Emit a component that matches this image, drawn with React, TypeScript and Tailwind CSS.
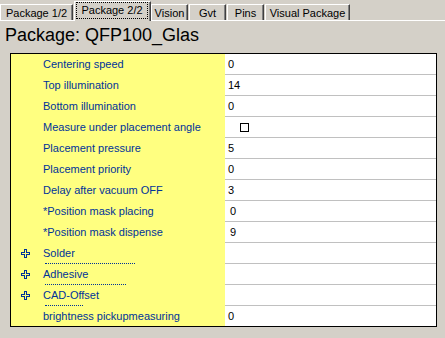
import React from "react";

type Row = {
  label: string;
  value?: string;
  checkbox?: boolean;
  group?: boolean;
  dots?: number;
  vpad?: boolean;
};

const rows: Row[] = [
  { label: "Centering speed", value: "0" },
  { label: "Top illumination", value: "14" },
  { label: "Bottom illumination", value: "0" },
  { label: "Measure under placement angle", checkbox: true },
  { label: "Placement pressure", value: "5" },
  { label: "Placement priority", value: "0" },
  { label: "Delay after vacuum OFF", value: "3" },
  { label: "*Position mask placing", value: "0", vpad: true },
  { label: "*Position mask dispense", value: "9", vpad: true },
  { label: "Solder", group: true, dots: 90 },
  { label: "Adhesive", group: true, dots: 81 },
  { label: "CAD-Offset", group: true, dots: 38 },
  { label: "brightness pickupmeasuring", value: "0" },
];

const tabs = [
  { name: "Package 1/2", w: "w-[73px]", ml: "ml-0" },
  { name: "Package 2/2", w: "w-[77px]", ml: "ml-px", active: true },
  { name: "Vision", w: "w-[37px]", ml: "ml-0" },
  { name: "Gvt", w: "w-[37px]", ml: "ml-px" },
  { name: "Pins", w: "w-[37px]", ml: "ml-px" },
  { name: "Visual Package", w: "w-[85px]", ml: "ml-px" },
];

function PlusIcon() {
  return (
    <svg width="9" height="9" viewBox="0 0 9 9" className="block">
      <path
        d="M3.5 0.5 H5.5 V3.5 H8.5 V5.5 H5.5 V8.5 H3.5 V5.5 H0.5 V3.5 H3.5 Z"
        fill="none"
        stroke="#003399"
        strokeWidth="1"
        shapeRendering="crispEdges"
      />
    </svg>
  );
}

export default function App() {
  return (
    <div
      className="w-[445px] h-[338px] overflow-hidden bg-[#d4d0c8] text-black"
      style={{ fontFamily: '"Liberation Sans", Arial, sans-serif' }}
    >
      {/* Tab strip */}
      <div className="flex h-[21px] items-end border-b border-white">
        {tabs.map((t) =>
          t.active ? (
            <div
              key={t.name}
              className={`${t.w} ${t.ml} relative z-10 -mb-px h-[20px] bg-[#d4d0c8] border-l border-t border-white border-r border-r-[#404040] shadow-[inset_-1px_0_0_#808080] pl-px pr-[2px] pb-[2px]`}
            >
              <div className="h-full border border-dotted border-black flex items-center justify-center text-[11px] leading-none">
                {t.name}
              </div>
            </div>
          ) : (
            <div
              key={t.name}
              className={`${t.w} ${t.ml} h-[16px] border-l border-t border-white border-r border-r-[#404040] shadow-[inset_-1px_0_0_#808080] flex items-center justify-center text-[11px] leading-none pt-px`}
            >
              {t.name}
            </div>
          )
        )}
      </div>

      {/* Title */}
      <div className="h-[32px] pt-[4px] pl-[5px] text-[18px] leading-[20px]">
        Package: QFP100_Glas
      </div>

      {/* Property grid */}
      <div className="ml-[10px] w-[427px] border border-black flex flex-col">
        {rows.map((r, i) => {
          const last = i === rows.length - 1;
          return (
            <div key={r.label} className="flex">
              <div
                className={`w-[214px] bg-[#ffff80] flex flex-col ${
                  last ? "h-[20px]" : "h-[21px]"
                }`}
              >
                <div className="h-[20px] flex items-center text-[11px] leading-[20px] text-[#003399]">
                  <div className="w-[32px] pl-[10px] flex items-center">
                    {r.group ? <PlusIcon /> : null}
                  </div>
                  <span className="whitespace-nowrap">{r.label}</span>
                </div>
                {!last && (
                  <div className="h-px pl-[34px]">
                    {r.dots ? (
                      <div
                        className="h-px border-t border-dotted border-[#003399]"
                        style={{ width: r.dots }}
                      />
                    ) : null}
                  </div>
                )}
              </div>
              <div
                className={`w-[211px] bg-white flex items-center text-[11px] leading-[20px] ${
                  last ? "h-[20px]" : "h-[21px] border-b border-[#c0c0c0]"
                } ${r.vpad ? "pl-[5px]" : "pl-[3px]"}`}
              >
                {r.checkbox ? (
                  <div className="ml-[12px] w-[9px] h-[9px] border border-black bg-white" />
                ) : (
                  <span>{r.value}</span>
                )}
              </div>
            </div>
          );
        })}
      </div>
    </div>
  );
}
